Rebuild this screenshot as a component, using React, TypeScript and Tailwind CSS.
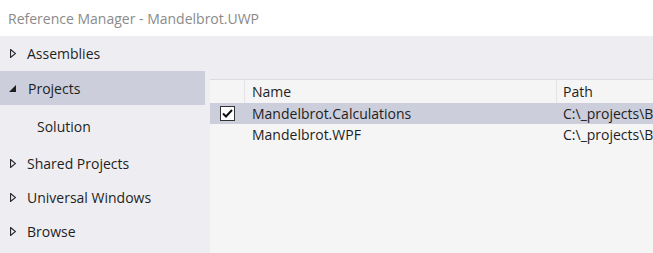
import React from "react";

const font = { fontFamily: '"Open Sans", "Liberation Sans", sans-serif' };

function Collapsed() {
  return (
    <svg width="6" height="9" viewBox="0 0 6 9" className="shrink-0">
      <path d="M0.5 0.5 L5.5 4.5 L0.5 8.5 Z" fill="#eeeef2" stroke="#2a2a2a" strokeWidth="1.2" />
    </svg>
  );
}

function Expanded() {
  return (
    <svg width="7" height="7" viewBox="0 0 7 7" className="shrink-0">
      <path d="M7 0 L7 7 L0 7 Z" fill="#1e1e1e" />
    </svg>
  );
}

const projects = [
  { name: "Mandelbrot.Calculations", path: "C:\\_projects\\Blogs\\Mandelbrot", checked: true },
  { name: "Mandelbrot.WPF", path: "C:\\_projects\\Blogs\\Mandelbrot", checked: false },
];

export default function App() {
  return (
    <div className="w-[653px] h-[253px] overflow-hidden bg-[#eeeef2] text-[#1e1e1e] flex flex-col" style={font}>
      {/* Title */}
      <div className="h-[36px] shrink-0 bg-white flex items-center pl-[8px] text-[14px] text-[#8a8a8a]">
        Reference Manager - Mandelbrot.UWP
      </div>

      <div className="flex flex-1 min-h-0">
        {/* Sidebar */}
        <div className="w-[205px] shrink-0 flex flex-col text-[14px]">
          <div className="h-[35px] flex items-center gap-[11px] pl-[10px]">
            <Collapsed />
            <span>Assemblies</span>
          </div>
          <div className="h-[34px] flex items-center gap-[12px] pl-[9px] bg-[#cccedb]">
            <Expanded />
            <span>Projects</span>
          </div>
          <div className="h-[42px] flex items-center pl-[37px]">Solution</div>
          <div className="h-[33px] flex items-center gap-[11px] pl-[10px]">
            <Collapsed />
            <span>Shared Projects</span>
          </div>
          <div className="h-[34px] flex items-center gap-[11px] pl-[10px]">
            <Collapsed />
            <span>Universal Windows</span>
          </div>
          <div className="h-[34px] flex items-center gap-[11px] pl-[10px]">
            <Collapsed />
            <span>Browse</span>
          </div>
        </div>

        {/* List */}
        <div className="flex-1 min-w-0 flex flex-col pl-[5px] pt-[43px]">
          <div className="flex-1 bg-[#f5f5f5] text-[14px] overflow-hidden">
            <div className="flex h-[24px] border-t border-[#dcdce2]">
              <div className="w-[35px] shrink-0 border-r border-[#e4e4e8]" />
              <div className="w-[312px] shrink-0 border-r border-[#e4e4e8] flex items-center pl-[7px]">Name</div>
              <div className="flex-1 flex items-center pl-[6px] whitespace-nowrap">Path</div>
            </div>
            {projects.map((p) => (
              <div key={p.name} className={`flex h-[21px] items-center whitespace-nowrap ${p.checked ? "bg-[#cccedb]" : ""}`}>
                <div className="w-[35px] shrink-0 flex items-center pl-[10px]">
                  {p.checked && (
                    <div className="w-[15px] h-[15px] bg-white border border-[#333] flex items-center justify-center">
                      <svg width="11" height="9" viewBox="0 0 11 9">
                        <path d="M1 4.5 L4 7.5 L10 1" fill="none" stroke="#111" strokeWidth="2" />
                      </svg>
                    </div>
                  )}
                </div>
                <div className="w-[312px] shrink-0 pl-[7px]">{p.name}</div>
                <div className="flex-1 min-w-0 pl-[6px] overflow-hidden">{p.path}</div>
              </div>
            ))}
          </div>
        </div>
      </div>
    </div>
  );
}
